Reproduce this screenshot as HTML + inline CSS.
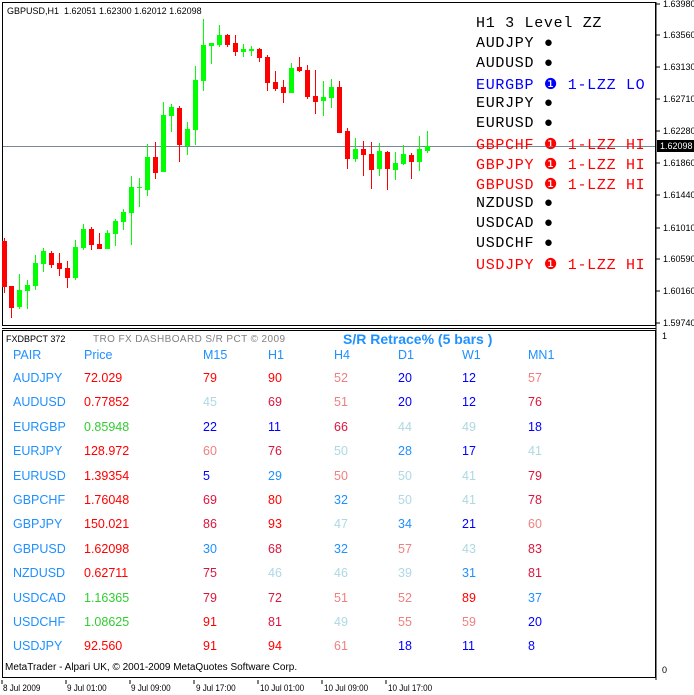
<!DOCTYPE html>
<html><head><meta charset="utf-8"><style>
body{margin:0;width:694px;height:695px;background:#fff;position:relative;overflow:hidden;font-family:"Liberation Sans",sans-serif;}
.a{position:absolute;white-space:nowrap;}
.ax{font-size:9px;color:#000;}
.tl{font-size:9px;color:#000;transform:scaleX(.9);transform-origin:0 0;}
.zz{font-family:"Liberation Mono",monospace;font-size:15px;letter-spacing:.7px;}
.t{font-size:12.5px;}
.r{color:#ff0000}.lc{color:#f08080}.lb{color:#add8e6}.b{color:#0000ff}.cr{color:#dc143c}.d{color:#1e90ff}.g{color:#32cd32}
</style></head><body>
<svg class="a" style="left:0;top:0" width="694" height="695">
<rect x="2.5" y="2.5" width="653" height="323" fill="none" stroke="#000"/>
<line x1="2" y1="328.5" x2="656" y2="328.5" stroke="#000"/>
<rect x="2.5" y="330.5" width="653" height="347" fill="none" stroke="#000"/>
<line x1="656" y1="2" x2="656" y2="680" stroke="#000"/>
<line x1="3" y1="146.5" x2="655" y2="146.5" stroke="#778899"/>
<g id="c"></g>
<g stroke="#000">
<line x1="656" y1="4" x2="660" y2="4"/><line x1="656" y1="35" x2="660" y2="35"/><line x1="656" y1="67" x2="660" y2="67"/><line x1="656" y1="99" x2="660" y2="99"/><line x1="656" y1="131" x2="660" y2="131"/><line x1="656" y1="163" x2="660" y2="163"/><line x1="656" y1="195" x2="660" y2="195"/><line x1="656" y1="228" x2="660" y2="228"/><line x1="656" y1="259" x2="660" y2="259"/><line x1="656" y1="291" x2="660" y2="291"/><line x1="656" y1="323" x2="660" y2="323"/>
<line x1="2" y1="680" x2="2" y2="684"/><line x1="66" y1="680" x2="66" y2="684"/><line x1="130" y1="680" x2="130" y2="684"/><line x1="194" y1="680" x2="194" y2="684"/><line x1="258" y1="680" x2="258" y2="684"/><line x1="322" y1="680" x2="322" y2="684"/><line x1="386" y1="680" x2="386" y2="684"/>
</g>
<rect x="657" y="140" width="37" height="12" fill="#000"/>
</svg>
<div class="a ax" style="left:7px;top:6px">GBPUSD,H1&nbsp; 1.62051 1.62300 1.62012 1.62098</div>
<div class="a ax" style="left:663px;top:-1px">1.63980</div>
<div class="a ax" style="left:663px;top:30px">1.63560</div>
<div class="a ax" style="left:663px;top:62px">1.63130</div>
<div class="a ax" style="left:663px;top:94px">1.62710</div>
<div class="a ax" style="left:663px;top:126px">1.62280</div>
<div class="a ax" style="left:660px;top:141px;color:#fff">1.62098</div>
<div class="a ax" style="left:663px;top:158px">1.61860</div>
<div class="a ax" style="left:663px;top:190px">1.61440</div>
<div class="a ax" style="left:663px;top:223px">1.61010</div>
<div class="a ax" style="left:663px;top:254px">1.60590</div>
<div class="a ax" style="left:663px;top:286px">1.60160</div>
<div class="a ax" style="left:663px;top:318px">1.59740</div>
<div class="a ax" style="left:662px;top:331px">1</div>
<div class="a ax" style="left:662px;top:665px">0</div>
<div class="a tl" style="left:3px;top:683px">8 Jul 2009</div>
<div class="a tl" style="left:67px;top:683px">9 Jul 01:00</div>
<div class="a tl" style="left:131px;top:683px">9 Jul 09:00</div>
<div class="a tl" style="left:196px;top:683px">9 Jul 17:00</div>
<div class="a tl" style="left:260px;top:683px">10 Jul 01:00</div>
<div class="a tl" style="left:324px;top:683px">10 Jul 09:00</div>
<div class="a tl" style="left:388px;top:683px">10 Jul 17:00</div>
<div class="a" style="left:5px;top:662px;font-size:10px">MetaTrader - Alpari UK, © 2001-2009 MetaQuotes Software Corp.</div>

<div class="a zz" style="left:476px;top:15px">H1 3 Level ZZ</div>
<div class="a zz" style="left:476px;top:35px">AUDJPY&nbsp;●</div>
<div class="a zz" style="left:476px;top:55px">AUDUSD&nbsp;●</div>
<div class="a zz b" style="left:476px;top:75px">EURGBP&nbsp;❶&nbsp;1-LZZ LO</div>
<div class="a zz" style="left:476px;top:95px">EURJPY&nbsp;●</div>
<div class="a zz" style="left:476px;top:115px">EURUSD&nbsp;●</div>
<div class="a zz r" style="left:476px;top:135px">GBPCHF&nbsp;❶&nbsp;1-LZZ HI</div>
<div class="a zz r" style="left:476px;top:155px">GBPJPY&nbsp;❶&nbsp;1-LZZ HI</div>
<div class="a zz r" style="left:476px;top:175px">GBPUSD&nbsp;❶&nbsp;1-LZZ HI</div>
<div class="a zz" style="left:476px;top:195px">NZDUSD&nbsp;●</div>
<div class="a zz" style="left:476px;top:215px">USDCAD&nbsp;●</div>
<div class="a zz" style="left:476px;top:235px">USDCHF&nbsp;●</div>
<div class="a zz r" style="left:476px;top:255px">USDJPY&nbsp;❶&nbsp;1-LZZ HI</div>

<div class="a ax" style="left:6px;top:334px">FXDBPCT 372</div>
<div class="a" style="left:93px;top:334px;font-size:10px;color:#808080;letter-spacing:.4px">TRO FX DASHBOARD S/R PCT © 2009</div>
<div class="a d" style="left:343px;top:331px;font-size:14px;font-weight:bold">S/R Retrace% (5 bars )</div>
<div id="tb"></div>
<script>
var rows=[["d:PAIR","d:Price","d:M15","d:H1","d:H4","d:D1","d:W1","d:MN1"],
["AUDJPY","r:72.029","r:79","r:90","lc:52","b:20","b:12","lc:57"],
["AUDUSD","r:0.77852","lb:45","cr:69","lc:51","b:20","b:12","cr:76"],
["EURGBP","g:0.85948","b:22","b:11","cr:66","lb:44","lb:49","b:18"],
["EURJPY","r:128.972","lc:60","cr:76","lb:50","d:28","b:17","lb:41"],
["EURUSD","r:1.39354","b:5","d:29","lc:50","lb:50","lb:41","cr:79"],
["GBPCHF","r:1.76048","cr:69","r:80","d:32","lb:50","lb:41","cr:78"],
["GBPJPY","r:150.021","cr:86","r:93","lb:47","d:34","b:21","lc:60"],
["GBPUSD","r:1.62098","d:30","cr:68","d:32","lc:57","lb:43","cr:83"],
["NZDUSD","r:0.62711","cr:75","lb:46","lb:46","lb:39","d:31","cr:81"],
["USDCAD","g:1.16365","cr:79","cr:72","lc:51","lc:52","r:89","d:37"],
["USDCHF","g:1.08625","r:91","cr:81","lb:49","lc:55","lc:59","b:20"],
["USDJPY","r:92.560","r:91","r:94","lc:61","b:18","b:11","b:8"]];
var cols=[13,84,203,268,334,398,462,528];
var h="";
rows.forEach(function(r,i){var y=348+(i==0?0:23+(i-1)*24.4);
r.forEach(function(c,j){var p=c.indexOf(":")>0?c.split(":"):["d",c];
h+='<div class="a t '+p[0]+'" style="left:'+cols[j]+'px;top:'+y+'px">'+p[1]+'</div>';});});
document.getElementById("tb").innerHTML=h;
var C=[[4,0,241,287,238,293],[11,0,286,308,286,318],[19,1,290,307,274,309],[27,1,285,291,280,309],[35,1,263,286,255,290],[43,1,251,264,248,272],[51,0,253,265,251,268],[59,0,263,269,253,276],[67,0,268,278,261,288],[75,1,247,278,240,280],[83,1,229,248,224,250],[91,0,229,245,227,250],[99,0,244,249,233,249],[107,1,233,249,230,249],[115,1,221,234,219,246],[123,1,212,222,209,230],[131,1,187,213,176,245],[139,1,187,188,178,207],[147,1,157,190,144,196],[155,0,157,173,142,179],[163,1,115,172,102,172],[171,1,107,116,104,132],[179,0,108,145,106,162],[187,1,129,146,122,155],[195,1,80,130,66,145],[203,1,45,81,19,91],[211,1,43,46,43,64],[219,1,35,45,25,47],[227,0,35,45,34,47],[235,0,43,52,35,56],[243,1,49,52,44,57],[251,1,49,51,46,56],[259,0,49,58,48,62],[267,0,57,83,55,91],[275,0,82,89,71,91],[283,0,87,93,80,103],[291,1,68,93,63,93],[299,0,67,71,57,72],[307,0,70,97,65,99],[315,0,96,102,70,114],[323,1,97,101,81,116],[331,1,87,98,79,108],[339,0,87,133,81,133],[347,0,131,159,128,169],[355,1,149,159,138,162],[363,0,149,155,141,176],[371,0,154,170,142,189],[379,1,151,169,143,176],[387,0,152,169,151,190],[395,1,163,170,152,180],[403,1,154,164,145,165],[411,0,155,162,153,179],[419,1,149,162,136,171],[427,1,146,151,131,153]];
var s="";C.forEach(function(c){var col=c[1]?"#00ff00":"#ff0000";
s+='<rect x="'+c[0]+'" y="'+c[4]+'" width="1" height="'+(c[5]-c[4])+'" fill="'+col+'"/>';
s+='<rect x="'+(c[0]-2)+'" y="'+c[2]+'" width="5" height="'+Math.max(1,c[3]-c[2])+'" fill="'+col+'"/>';});
document.getElementById("c").innerHTML=s;
</script>
</body></html>
